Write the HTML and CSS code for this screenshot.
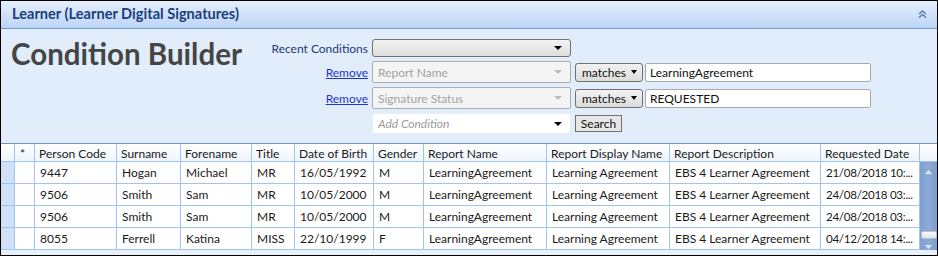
FILE: index.html
```html
<!DOCTYPE html>
<html>
<head>
<meta charset="utf-8">
<title>Learner (Learner Digital Signatures)</title>
<link rel="stylesheet" href="styles.css">
</head>
<body>
<div class="panel">
  <div class="titlebar">
    <span class="title">Learner (Learner Digital Signatures)</span>
    <svg class="collapse" width="9" height="8" viewBox="0 0 9 8"><path d="M1 4 L4.5 1 L8 4 M1 7.5 L4.5 4.5 L8 7.5" fill="none" stroke="#5d7cab" stroke-width="1.4"/></svg>
  </div>
  <div class="builder">
    <h1 class="heading">Condition Builder</h1>
    <div class="conditions">
      <span class="label">Recent Conditions</span>
      <div class="combo combo-recent"><span class="combo-text"></span><i class="arrow"></i></div>
      <span></span><span></span>

      <a class="remove" href="#">Remove</a>
      <div class="combo combo-disabled"><span class="combo-text">Report Name</span><i class="arrow arrow-light"></i></div>
      <div class="matches"><span>matches</span><i class="arrow"></i></div>
      <div class="input">LearningAgreement</div>

      <a class="remove" href="#">Remove</a>
      <div class="combo combo-disabled"><span class="combo-text">Signature Status</span><i class="arrow arrow-light"></i></div>
      <div class="matches"><span>matches</span><i class="arrow"></i></div>
      <div class="input">REQUESTED</div>

      <span></span>
      <div class="combo combo-add"><span class="combo-text placeholder">Add Condition</span><i class="arrow"></i></div>
      <button class="search">Search</button>
      <span></span>
    </div>
  </div>
  <div class="datagrid">
    <div class="row header">
      <div class="cell rh"></div>
      <div class="cell star">*</div>
      <div class="cell">Person Code</div>
      <div class="cell">Surname</div>
      <div class="cell">Forename</div>
      <div class="cell">Title</div>
      <div class="cell">Date of Birth</div>
      <div class="cell">Gender</div>
      <div class="cell">Report Name</div>
      <div class="cell">Report Display Name</div>
      <div class="cell">Report Description</div>
      <div class="cell">Requested Date</div>
      <div class="cell filler"></div>
    </div>
    <div class="body">
      <div class="rows">
        <div class="row">
          <div class="cell rh"></div><div class="cell"></div>
          <div class="cell">9447</div><div class="cell">Hogan</div><div class="cell">Michael</div><div class="cell">MR</div><div class="cell">16/05/1992</div><div class="cell">M</div><div class="cell">LearningAgreement</div><div class="cell">Learning Agreement</div><div class="cell">EBS 4 Learner Agreement</div><div class="cell date">21/08/2018 10:...</div>
        </div>
        <div class="row">
          <div class="cell rh"></div><div class="cell"></div>
          <div class="cell">9506</div><div class="cell">Smith</div><div class="cell">Sam</div><div class="cell">MR</div><div class="cell">10/05/2000</div><div class="cell">M</div><div class="cell">LearningAgreement</div><div class="cell">Learning Agreement</div><div class="cell">EBS 4 Learner Agreement</div><div class="cell date">24/08/2018 03:...</div>
        </div>
        <div class="row">
          <div class="cell rh"></div><div class="cell"></div>
          <div class="cell">9506</div><div class="cell">Smith</div><div class="cell">Sam</div><div class="cell">MR</div><div class="cell">10/05/2000</div><div class="cell">M</div><div class="cell">LearningAgreement</div><div class="cell">Learning Agreement</div><div class="cell">EBS 4 Learner Agreement</div><div class="cell date">24/08/2018 03:...</div>
        </div>
        <div class="row">
          <div class="cell rh"></div><div class="cell"></div>
          <div class="cell">8055</div><div class="cell">Ferrell</div><div class="cell">Katina</div><div class="cell">MISS</div><div class="cell">22/10/1999</div><div class="cell">F</div><div class="cell">LearningAgreement</div><div class="cell">Learning Agreement</div><div class="cell">EBS 4 Learner Agreement</div><div class="cell date">04/12/2018 14:...</div>
        </div>
      </div>
      <div class="scrollbar">
        <svg class="sb-up" width="7" height="4" viewBox="0 0 7 4"><path d="M0 4 L3.5 0 L7 4 Z" fill="#dfe8f5"/></svg>
        <div class="sb-thumb"></div>
        <svg class="sb-down" width="7" height="4" viewBox="0 0 7 4"><path d="M0 0 L3.5 4 L7 0 Z" fill="#dfe8f5"/></svg>
      </div>
    </div>
  </div>
</div>
</body>
</html>
```

FILE: styles.css
```css
* { box-sizing: border-box; }

html, body {
  margin: 0;
  padding: 0;
  background: #ffffff;
}

body {
  font-family: "Lato", "Noto Sans", sans-serif;
  font-size: 12px;
  color: #1a1a1a;
}

.panel {
  width: 938px;
  height: 256px;
  border: 1px solid #000;
  background: #e2edfc;
  display: flex;
  flex-direction: column;
  overflow: hidden;
}

.titlebar {
  height: 28px;
  flex: none;
  display: flex;
  align-items: center;
  justify-content: space-between;
  padding: 0 8px 0 11px;
  background: linear-gradient(#e5effc, #bcd5f6);
  border-bottom: 1px solid #6f9bd6;
}

.title {
  font-weight: bold;
  font-size: 14.6px;
  color: #1d3d7c;
  position: relative;
  top: -1px;
}

.collapse { display: block; margin-right: 2px; margin-top: -2px; }

.builder {
  height: 115px;
  flex: none;
  display: flex;
  padding: 10px 0 0 10px;
  border-bottom: 1px solid #7496c3;
}

.heading {
  margin: 0;
  width: 247px;
  flex: none;
  font-size: 29.5px;
  line-height: 30px;
  font-weight: bold;
  color: #454545;
  white-space: nowrap;
}

.conditions {
  display: grid;
  grid-template-columns: 110px 199px 68px 224px;
  grid-template-rows: 18px 22px 22px 21px;
  column-gap: 4px;
  row-gap: 4px;
  align-items: center;
}

.label {
  justify-self: end;
  white-space: nowrap;
  color: #1d3a72;
  font-size: 12px;
}

.remove {
  justify-self: end;
  color: #1c36c9;
  text-decoration: underline;
  font-size: 12px;
}

.combo {
  height: 100%;
  display: flex;
  align-items: center;
  justify-content: space-between;
  padding: 0 6px 0 5px;
  border: 1px solid #a9adb2;
  border-radius: 2px;
}

.combo-recent {
  border-color: #707070;
  border-radius: 3px;
  background: linear-gradient(#f3f3f3, #dddddd);
}

.combo-disabled {
  background: #f4f4f4;
  color: #a2a2a2;
}

.combo-add {
  background: #ffffff;
  border-color: #e6edf7;
}

.placeholder {
  font-style: italic;
  color: #9b9b9b;
}

.arrow {
  display: block;
  width: 0;
  height: 0;
  border-left: 4px solid transparent;
  border-right: 4px solid transparent;
  border-top: 4px solid #000;
  margin-right: 2px;
}

.arrow-light { border-top-color: #bcbcbc; }

.matches {
  height: 19px;
  display: flex;
  align-items: center;
  justify-content: space-between;
  padding: 0 5px 0 6px;
  border: 1px solid #707070;
  border-radius: 3px;
  background: linear-gradient(#f2f2f2, #dcdcdc);
  color: #111;
}

.matches .arrow {
  margin-right: 0;
  border-left-width: 3.5px;
  border-right-width: 3.5px;
}

.input {
  height: 19px;
  margin-left: -2px;
  padding: 0 0 0 4px;
  display: flex;
  align-items: center;
  background: #ffffff;
  border: 1px solid #a5a9b0;
  border-radius: 2px;
  color: #111;
}

.search {
  justify-self: start;
  height: 17px;
  width: 47px;
  padding: 0;
  font-family: inherit;
  font-size: 12px;
  color: #111;
  background: #e6e6e6;
  border: 1px solid #707070;
  border-radius: 0;
  line-height: 15px;
}

/* Data grid */
.datagrid {
  flex: 1;
  display: flex;
  flex-direction: column;
  background: #e8f0fb;
}

.row {
  display: grid;
  grid-template-columns: 14px 20px 82px 64px 71px 43px 79px 50px 123px 123px 151px 99px;
  height: 22px;
}

.row.header {
  grid-template-columns: 14px 20px 82px 64px 71px 43px 79px 50px 123px 123px 151px 99px 17px;
  height: 18px;
  background: linear-gradient(#ffffff, #eef4fc);
}

.cell {
  border-right: 1px solid #9dc4f3;
  border-bottom: 1px solid #9dc4f3;
  padding: 0 0 0 5px;
  display: flex;
  align-items: center;
  white-space: nowrap;
  overflow: hidden;
  background: #ffffff;
  color: #1a1a1a;
}

.cell.date { font-size: 11.6px; letter-spacing: -0.3px; padding-left: 5px; }

.header .cell {
  padding-left: 4px;
  background: transparent;
  line-height: 17px;
  padding-top: 1px;
}

.header .cell.filler {
  border-right: none;
  border-bottom: 1px solid #9dc4f3;
}

.header .cell.star { padding-left: 5px; }

.rh {
  padding: 0;
  background: #cfe0f7;
}

.header .rh { background: transparent; }

.body {
  display: flex;
}

.rows {
  width: 919px;
}

.scrollbar {
  width: 17px;
  height: 88px;
  background: linear-gradient(90deg, #7f9fcf, #8daad6 50%, #7d9dcc);
  display: flex;
  flex-direction: column;
  align-items: center;
  padding-top: 8px;
}

.sb-up { display: block; }

.sb-thumb {
  margin-top: 57px;
  width: 16px;
  height: 8px;
  border: 1px solid #b7c3d4;
  border-radius: 2px;
  background: linear-gradient(#fbfcfe, #dde3ec);
}

.sb-down { display: block; margin-top: 6px; }
```
